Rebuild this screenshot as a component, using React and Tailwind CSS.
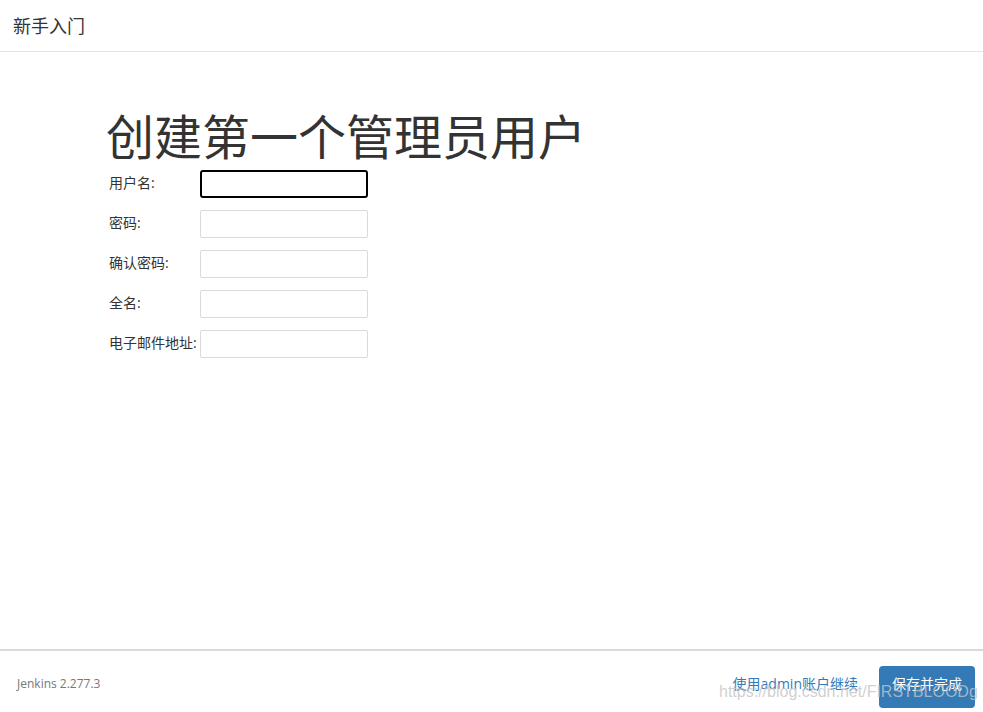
const fields = [
  { label: '用户名:', focused: true },
  { label: '密码:', type: 'password' },
  { label: '确认密码:', type: 'password' },
  { label: '全名:' },
  { label: '电子邮件地址:' },
];

export default function App() {
  return (
    <div className="relative flex h-[712px] w-[983px] flex-col bg-white text-[#333] font-['Open_Sans','Noto_Sans_CJK_SC',sans-serif]">
      {/* Header */}
      <div className="flex h-[52px] shrink-0 items-center border-b border-[#e5e5e5] pl-[13px]">
        <span className="text-[18px] leading-none">新手入门</span>
      </div>

      {/* Body */}
      <div className="flex-1">
        <h1 className="mt-[57px] pl-[106px] text-[48px] leading-[56px] font-normal text-[#333]">
          创建第一个管理员用户
        </h1>
        <div className="mt-[5px] flex flex-col gap-[12px] pl-[109px]">
          {fields.map((f) => (
            <div key={f.label} className="flex items-center">
              <label className="-mt-[3px] w-[91px] text-[14px] leading-none text-[#333]">{f.label}</label>
              <input
                type={f.type || 'text'}
                className={
                  f.focused
                    ? 'h-[28px] w-[168px] rounded-[3px] border-2 border-black bg-white outline-none'
                    : 'h-[28px] w-[168px] rounded-[2px] border border-[#dadada] bg-white outline-none'
                }
              />
            </div>
          ))}
        </div>
      </div>

      {/* Footer */}
      <div className="flex h-[63px] shrink-0 items-center border-t-2 border-[#d9d9d9] pl-[17px] pr-[8px]">
        <span className="mt-[4px] text-[12px] text-[#777]">Jenkins 2.277.3</span>
        <div className="ml-auto flex items-center gap-[21px]">
          <a className="mt-[3px] text-[14px] text-[#337ab7]">使用admin账户继续</a>
          <button className="mt-[10px] h-[42px] w-[96px] rounded-[4px] bg-[#337ab7] pb-[6px] text-[14px] text-white">
            保存并完成
          </button>
        </div>
      </div>

      {/* CSDN watermark */}
      <span className="pointer-events-none absolute left-[719px] top-[684px] text-[16px] leading-none text-[#c4c4c4]/80 font-['Liberation_Sans',sans-serif]">
        https://blog.csdn.net/FIRSTBLOODg
      </span>
    </div>
  );
}
